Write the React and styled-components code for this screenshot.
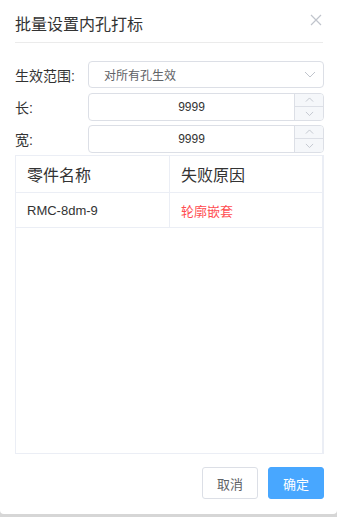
import React from "react";
import styled, { createGlobalStyle } from "styled-components";

const Global = createGlobalStyle`
  html, body { margin: 0; padding: 0; }
  body {
    background: #d6d6d6;
    font-family: "Liberation Sans", "Noto Sans CJK SC", sans-serif;
    width: 337px;
    height: 517px;
    overflow: hidden;
  }
`;

const Dialog = styled.div`
  width: 337px;
  height: 514px;
  background: #fff;
  border-radius: 0 0 4px 4px;
  box-sizing: border-box;
  padding: 0 13px 0 15px;
  display: flex;
  flex-direction: column;
`;

const Header = styled.div`
  height: 42px;
  border-bottom: 1px solid #ebebeb;
  display: flex;
  justify-content: space-between;
  align-items: flex-start;
  margin-right: 1px;
`;

const Title = styled.div`
  font-size: 16px;
  line-height: 22px;
  padding-top: 14px;
  color: #333;
`;

const Close = styled.div`
  margin-top: 14px;
  margin-right: 1px;
  width: 12px;
  height: 12px;
  display: flex;
`;

const Form = styled.div`
  margin-top: 18px;
  display: flex;
  flex-direction: column;
  gap: 5px;
`;

const Row = styled.div`
  display: flex;
  align-items: center;
  height: 27px;
`;

const Label = styled.div`
  width: 73px;
  font-size: 14px;
  color: #333;
`;

const Select = styled.div`
  flex: 1;
  height: 27px;
  box-sizing: border-box;
  border: 1px solid #dcdfe6;
  border-radius: 4px;
  display: flex;
  align-items: center;
  justify-content: space-between;
  padding: 0 7px 0 15px;
  font-size: 12px;
  color: #606266;
`;

const NumberBox = styled.div`
  flex: 1;
  height: 28px;
  box-sizing: border-box;
  border: 1px solid #dcdfe6;
  border-radius: 4px;
  display: flex;
  overflow: hidden;
`;

const NumberValue = styled.div`
  flex: 1;
  display: flex;
  align-items: center;
  justify-content: center;
  font-size: 12px;
  color: #333;
`;

const Stepper = styled.div`
  width: 28px;
  border-left: 1px solid #dcdfe6;
  background: #f5f7fa;
  display: flex;
  flex-direction: column;
`;

const Step = styled.div`
  flex: 1;
  display: flex;
  align-items: center;
  justify-content: center;
  border-top: ${(p) => (p.$bottom ? "1px solid #dcdfe6" : "none")};
`;

const Table = styled.div`
  margin-top: 3px;
  height: 299px;
  box-sizing: border-box;
  border: 1px solid #ebeef5;
  border-right-width: 2px;
  display: flex;
  flex-direction: column;
`;

const TRow = styled.div`
  display: grid;
  grid-template-columns: 153px 1fr;
  height: ${(p) => p.$h}px;
  border-bottom: 1px solid #ebeef5;
  box-sizing: border-box;
`;

const Cell = styled.div`
  display: flex;
  align-items: center;
  padding-left: 11px;
  font-size: ${(p) => (p.$head ? 16 : 13)}px;
  color: ${(p) => (p.$red ? "#ff4d51" : "#333")};
  border-left: ${(p) => (p.$second ? "1px solid #ebeef5" : "none")};
`;

const Footer = styled.div`
  margin-top: 13px;
  display: flex;
  justify-content: flex-end;
  gap: 10px;
`;

const Button = styled.button`
  width: 56px;
  height: 32px;
  box-sizing: border-box;
  border-radius: 3px;
  font-family: inherit;
  font-size: 13px;
  padding: 0;
  border: 1px solid ${(p) => (p.$primary ? "#48a7ff" : "#dcdfe6")};
  background: ${(p) => (p.$primary ? "#48a7ff" : "#fff")};
  color: ${(p) => (p.$primary ? "#fff" : "#606266")};
`;

const Chevron = ({ up, size = 8, color = "#c0c4cc" }) => (
  <svg width={size + 2} height={size / 2 + 2} viewBox="0 0 10 6">
    <path
      d={up ? "M1 5 L5 1 L9 5" : "M1 1 L5 5 L9 1"}
      fill="none"
      stroke={color}
      strokeWidth="1"
    />
  </svg>
);

const NumberInput = ({ value }) => (
  <NumberBox>
    <NumberValue>{value}</NumberValue>
    <Stepper>
      <Step>
        <Chevron up size={7} />
      </Step>
      <Step $bottom>
        <Chevron size={7} />
      </Step>
    </Stepper>
  </NumberBox>
);

export default function App() {
  return (
    <>
      <Global />
      <Dialog>
        <Header>
          <Title>批量设置内孔打标</Title>
          <Close>
            <svg width="12" height="12" viewBox="0 0 12 12">
              <path d="M1 1 L11 11 M11 1 L1 11" stroke="#c0c4cc" strokeWidth="1.2" />
            </svg>
          </Close>
        </Header>
        <Form>
          <Row>
            <Label>生效范围:</Label>
            <Select>
              <span>对所有孔生效</span>
              <svg width="12" height="7" viewBox="0 0 12 7">
                <path d="M1 1 L6 6 L11 1" fill="none" stroke="#c0c4cc" strokeWidth="1" />
              </svg>
            </Select>
          </Row>
          <Row>
            <Label>长:</Label>
            <NumberInput value="9999" />
          </Row>
          <Row>
            <Label>宽:</Label>
            <NumberInput value="9999" />
          </Row>
        </Form>
        <Table>
          <TRow $h={37}>
            <Cell $head>零件名称</Cell>
            <Cell $head $second>失败原因</Cell>
          </TRow>
          <TRow $h={35}>
            <Cell>RMC-8dm-9</Cell>
            <Cell $second $red>轮廓嵌套</Cell>
          </TRow>
        </Table>
        <Footer>
          <Button>取消</Button>
          <Button $primary>确定</Button>
        </Footer>
      </Dialog>
    </>
  );
}
